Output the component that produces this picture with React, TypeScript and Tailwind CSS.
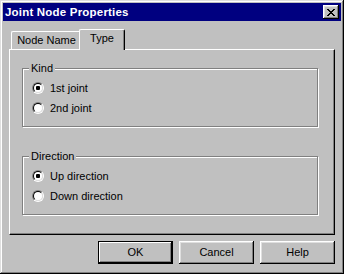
import React from 'react'

const bevel =
  'shadow-[inset_-1px_-1px_#000,inset_1px_1px_#fff,inset_-2px_-2px_#808080,inset_2px_2px_#dfdfdf]'

function Radio({ checked }: { checked?: boolean }) {
  return (
    <span className="relative block w-[12px] h-[12px] rounded-full border border-t-[#808080] border-l-[#808080] border-b-white border-r-white">
      <span className="absolute inset-0 rounded-full border border-t-black border-l-black border-b-[#dfdfdf] border-r-[#dfdfdf] bg-white flex items-center justify-center">
        {checked && <span className="block w-[4px] h-[4px] rounded-[1px] bg-black" />}
      </span>
    </span>
  )
}

function Group({ title, options }: { title: string; options: { label: string; checked?: boolean }[] }) {
  return (
    <div className="relative w-[296px] h-[59px] border border-[#808080] shadow-[1px_1px_0_#fff,inset_1px_1px_0_#fff] pl-[9px] pt-[9px]">
      <span className="absolute left-[6px] top-[-7px] px-[2px] bg-[#c0c0c0] leading-[13px]">{title}</span>
      {options.map((o) => (
        <div key={o.label} className="flex items-center h-[20px] gap-[6px]">
          <Radio checked={o.checked} />
          <span className="leading-[13px]">{o.label}</span>
        </div>
      ))}
    </div>
  )
}

export default function App() {
  return (
    <div
      className={`w-[344px] h-[274px] bg-[#c0c0c0] p-[3px] flex flex-col text-[11px] text-black shadow-[inset_-1px_-1px_#000,inset_1px_1px_#dfdfdf,inset_-2px_-2px_#808080,inset_2px_2px_#fff]`}
      style={{ fontFamily: '"Liberation Sans", Arial, sans-serif' }}
    >
      <div className="h-[18px] bg-[#000080] flex items-center justify-between pl-[2px] pr-[2px]">
        <span className="text-white font-bold text-[11.5px] leading-[13px] tracking-[0.2px]">Joint Node Properties</span>
        <div className={`w-[16px] h-[14px] bg-[#c0c0c0] ${bevel} flex items-center justify-center`}>
          <svg width="8" height="7" viewBox="0 0 8 7" shapeRendering="crispEdges">
            <path d="M0 0h2v1H0zM6 0h2v1H6zM1 1h2v1H1zM5 1h2v1H5zM2 2h4v1H2zM3 3h2v1H3zM2 4h4v1H2zM1 5h2v1H1zM5 5h2v1H5zM0 6h2v1H0zM6 6h2v1H6z" fill="#000" />
          </svg>
        </div>
      </div>

      <div className="flex flex-col px-[6px]">
        <div className="flex items-end h-[20px] mt-[8px] pl-[2px]">
          <div className="w-[70px] h-[18px] border-l border-t border-white rounded-tl-[2px] rounded-tr-[2px] shadow-[inset_-1px_0_#808080] flex items-center justify-center leading-[13px]">
            Node Name
          </div>
          <div className="relative z-10 -ml-[2px] mb-[-1px] w-[46px] h-[21px] bg-[#c0c0c0] border-l border-t border-r border-white border-r-black rounded-tl-[2px] rounded-tr-[2px] shadow-[inset_-1px_0_#808080] flex items-start justify-center pt-[2px] leading-[13px]">
            Type
          </div>
        </div>

        <div className="h-[186px] border border-white border-r-black border-b-black shadow-[inset_-1px_-1px_#808080] pt-[18px] pl-[12px] flex flex-col">
          <Group title="Kind" options={[{ label: '1st joint', checked: true }, { label: '2nd joint' }]} />
          <div className="mt-[29px]">
            <Group title="Direction" options={[{ label: 'Up direction', checked: true }, { label: 'Down direction' }]} />
          </div>
        </div>

        <div className="flex justify-end gap-[6px] mt-[6px]">
          <button className="w-[75px] h-[23px] bg-[#c0c0c0] border border-black shadow-[inset_-1px_-1px_#000,inset_1px_1px_#fff,inset_-2px_-2px_#808080] leading-[13px]">
            OK
          </button>
          <button className={`w-[75px] h-[23px] bg-[#c0c0c0] ${bevel} leading-[13px]`}>Cancel</button>
          <button className={`w-[75px] h-[23px] bg-[#c0c0c0] ${bevel} leading-[13px]`}>Help</button>
        </div>
      </div>
    </div>
  )
}
